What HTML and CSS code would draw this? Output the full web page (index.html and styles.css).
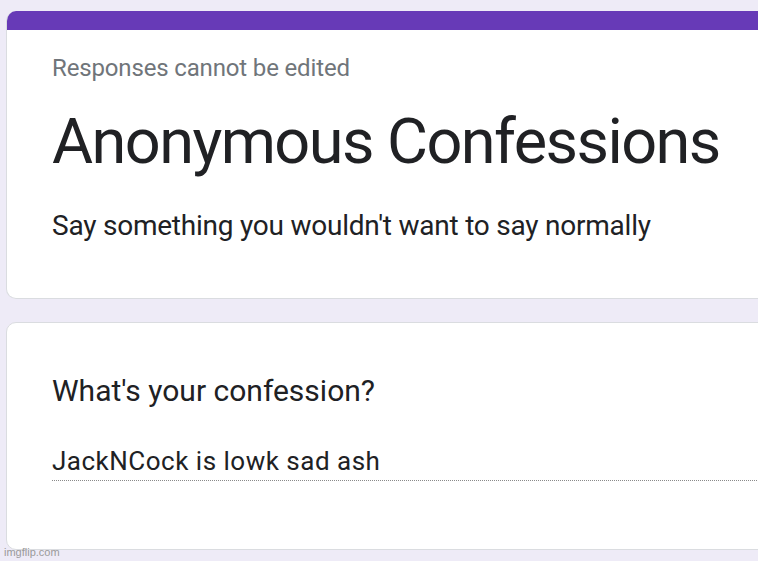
FILE: index.html
```html
<!DOCTYPE html>
<html lang="en">
<head>
<meta charset="utf-8">
<title>Anonymous Confessions</title>
<link rel="stylesheet" href="styles.css">
</head>
<body>
<main class="page">
  <section class="card header-card">
    <div class="accent"></div>
    <div class="header-body">
      <p class="note">Responses cannot be edited</p>
      <h1 class="title">Anonymous Confessions</h1>
      <p class="desc">Say something you wouldn't want to say normally</p>
    </div>
  </section>
  <section class="card question-card">
    <h2 class="question">What's your confession?</h2>
    <div class="answer">JackNCock is lowk sad ash</div>
  </section>
</main>
<div class="watermark">imgflip.com</div>
</body>
</html>
```
FILE: styles.css
```css
html, body {
  margin: 0;
  padding: 0;
  background: #eeebf7;
  overflow: hidden;
  height: 561px;
}
body {
  font-family: Roboto, "Noto Sans", Arial, sans-serif;
  color: #202124;
  position: relative;
}
.page {
  padding: 11px 0 0 6px;
  display: flex;
  flex-direction: column;
  gap: 23px;
  width: 790px;
}
.card {
  background: #fff;
  border: 1px solid #dadce0;
  border-radius: 10px;
  box-sizing: border-box;
}
.header-card {
  height: 288px;
  overflow: hidden;
  border-top: none;
}
.accent {
  height: 19px;
  background: #673ab7;
}
.header-body {
  padding: 0 0 0 45px;
}
.note {
  margin: 24px 0 0;
  font-size: 24px;
  line-height: 28px;
  letter-spacing: -0.15px;
  color: #70757a;
}
.title {
  margin: 24px 0 0;
  font-size: 63px;
  font-weight: 400;
  line-height: 72px;
  letter-spacing: -1.55px;
}
.desc {
  margin: 32px 0 0;
  font-size: 28px;
  line-height: 32px;
  letter-spacing: -0.23px;
}
.question-card {
  height: 228px;
  padding: 50px 0 0 45px;
}
.question {
  margin: 0;
  font-size: 30px;
  font-weight: 400;
  line-height: 36px;
  letter-spacing: 0;
}
.answer {
  margin-top: 34px;
  font-size: 26px;
  line-height: 36px;
  letter-spacing: 0.5px;
  border-bottom: 1px dotted #8a8a8a;
  padding-bottom: 1px;
}
.watermark {
  position: absolute;
  left: 4px;
  top: 546px;
  font-family: "Liberation Sans", Arial, sans-serif;
  font-size: 11px;
  color: #9a9a9a;
}
```
